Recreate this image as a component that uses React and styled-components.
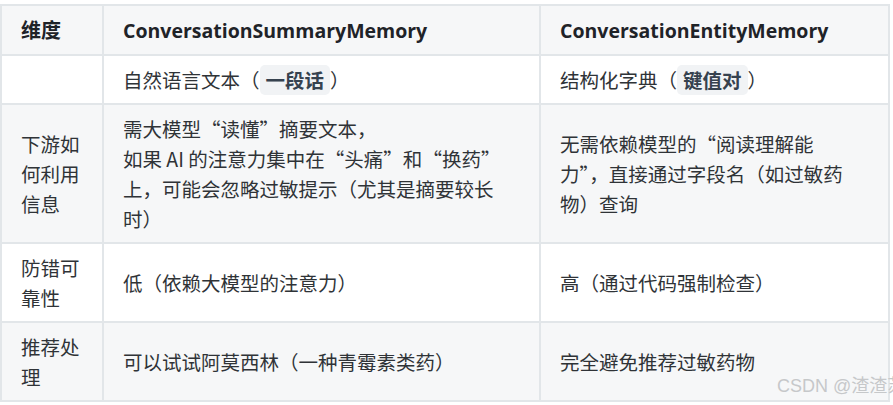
import React from "react";
import styled, { createGlobalStyle } from "styled-components";

const Global = createGlobalStyle`
  html, body { margin: 0; padding: 0; background: #ffffff; overflow: hidden; }
  body { font-family: "Noto Sans CJK SC", "Noto Sans", sans-serif; }
`;

const Page = styled.div`
  position: relative;
  width: 893px;
  height: 405px;
  padding-top: 4px;
  box-sizing: border-box;
  overflow: hidden;
`;

const Grid = styled.div`
  display: grid;
  grid-template-columns: 100px 435px 347px;
  gap: 2px;
  padding: 2px;
  width: max-content;
  background: #e2e6e9;
`;

const CellBox = styled.div`
  display: flex;
  align-items: center;
  padding: 8.5px 19px;
  background: ${(p) => (p.$shade ? "#f6f7f8" : "#ffffff")};
  font-size: ${(p) => (p.$head ? "20px" : "19.5px")};
  line-height: 30px;
  color: ${(p) => (p.$head ? "#1f2328" : "#2f3337")};
  font-weight: ${(p) => (p.$head ? 700 : 400)};
`;

const Latin = styled.span`
  font-family: "Open Sans", "Noto Sans CJK SC", sans-serif;
  font-weight: 700;
  font-size: 19.5px;
`;

const Q = styled.span`
  font-family: "Noto Sans CJK SC", sans-serif;
  font-feature-settings: "fwid" 1;
`;

const Code = styled.span`
  display: inline-block;
  background: #f1f3f5;
  border-radius: 5px;
  padding: 0 6px;
  line-height: 30px;
  font-weight: 700;
  color: #36424f;
`;

const Watermark = styled.div`
  position: absolute;
  left: 777px;
  top: 371px;
  font-family: "Liberation Sans", "Noto Sans CJK SC", sans-serif;
  font-size: 18px;
  color: #c6c8ca;
  white-space: nowrap;
`;

const Cell = ({ shade, head, children }) => (
  <CellBox $shade={shade} $head={head}>
    <div>{children}</div>
  </CellBox>
);

const rows = [
  {
    shade: false,
    cells: [
      "",
      <>自然语言文本（<Code>一段话</Code>）</>,
      <>结构化字典（<Code>键值对</Code>）</>,
    ],
  },
  {
    shade: true,
    cells: [
      "下游如何利用信息",
      <>
        需大模型<Q>“</Q>读懂<Q>”</Q>摘要文本，
        <br />
        如果 AI 的注意力集中在<Q>“</Q>头痛<Q>”</Q>和<Q>“</Q>换药<Q>”</Q>
        <br />
        上，可能会忽略过敏提示（尤其是摘要较长
        <br />
        时）
      </>,
      <>
        无需依赖模型的<Q>“</Q>阅读理解能
        <br />
        力”，直接通过字段名（如过敏药
        <br />
        物）查询
      </>,
    ],
  },
  {
    shade: false,
    cells: ["防错可靠性", "低（依赖大模型的注意力）", "高（通过代码强制检查）"],
  },
  {
    shade: true,
    cells: ["推荐处理", "可以试试阿莫西林（一种青霉素类药）", "完全避免推荐过敏药物"],
  },
];

export default function App() {
  return (
    <Page>
      <Global />
      <Grid>
        <Cell shade head>维度</Cell>
        <Cell shade head><Latin>ConversationSummaryMemory</Latin></Cell>
        <Cell shade head><Latin>ConversationEntityMemory</Latin></Cell>
        {rows.map((r, i) =>
          r.cells.map((c, j) => (
            <Cell key={`${i}-${j}`} shade={r.shade}>
              {c}
            </Cell>
          ))
        )}
      </Grid>
      <Watermark>CSDN @渣渣苏</Watermark>
    </Page>
  );
}
